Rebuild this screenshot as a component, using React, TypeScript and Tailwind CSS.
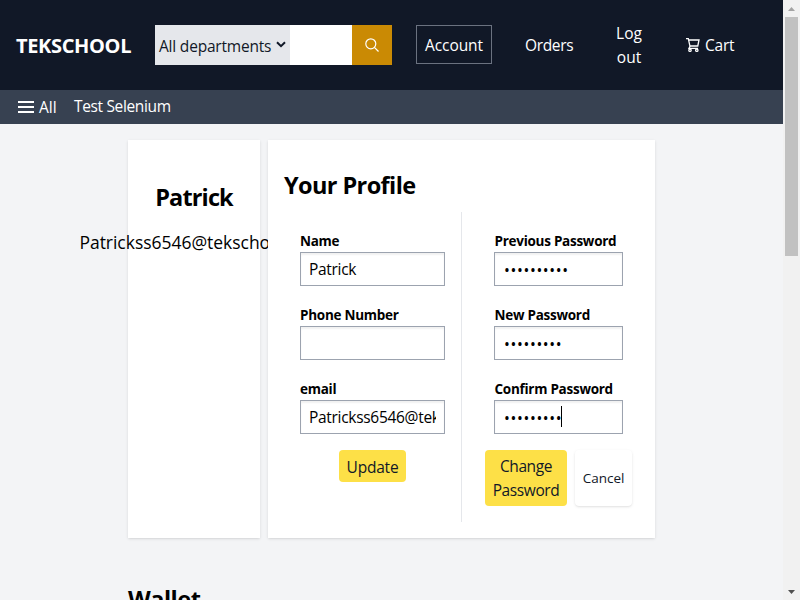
function SearchIcon() {
  return (
    <svg className="h-[14px] w-[14px]" viewBox="0 0 14 14" fill="none" stroke="currentColor" strokeWidth="1.2">
      <circle cx="5.8" cy="5.8" r="5" />
      <path d="M9.4 9.4 13.5 13.5" />
    </svg>
  );
}

function CartIcon() {
  return (
    <svg className="h-[14px] w-[14px]" viewBox="0 0 14 14" fill="none" stroke="currentColor" strokeWidth="1.3">
      <path d="M0 .7h2.3L4 8.3 3 10.4h9M2.7 2h10.3l-1.2 6H4" />
      <circle cx="4" cy="12.2" r="1.2" />
      <circle cx="10.8" cy="12.2" r="1.2" />
    </svg>
  );
}

function Header() {
  return (
    <header className="flex h-[90px] shrink-0 items-center bg-[#111827] pl-4 text-[15.5px] leading-6 text-white">
      <div className="w-[139px] pt-[2px] text-[20px] font-bold leading-7 tracking-[-0.35px]">TEKSCHOOL</div>
      <div className="flex h-10 w-[237px] text-[#111827]">
        <div className="flex w-[135px] items-center bg-[#e5e7eb] pl-1 pt-[2px]">
          <span className="w-[117px] whitespace-nowrap tracking-[-0.2px]">All departments</span>
          <svg className="-mt-[3px] h-[7px] w-[10px]" viewBox="0 0 10 7" fill="none" stroke="#111827" strokeWidth="2">
            <path d="M1 1.2 5 5.2 9 1.2" />
          </svg>
        </div>
        <div className="w-[62px] bg-white" />
        <button className="flex w-10 items-center justify-center bg-[#ca8a04] text-white">
          <SearchIcon />
        </button>
      </div>
      <nav className="flex items-center">
        <a className="-mt-px ml-6 flex h-[39px] w-[76px] items-center justify-center border border-[#6b7280] pt-px tracking-[-0.1px]">Account</a>
        <a className="ml-[33px] w-[49px] tracking-[-0.35px]">Orders</a>
        <a className="ml-[38px] w-[34px] text-center">Log out</a>
        <a className="ml-[40px] flex items-center gap-[5px] tracking-[-0.25px]">
          <CartIcon />
          Cart
        </a>
      </nav>
    </header>
  );
}

function SubNav() {
  return (
    <div className="flex h-[34px] shrink-0 items-center bg-[#374151] pl-[18px] text-[15.5px] leading-6 text-white">
      <svg className="mr-[5px] h-[12px] w-4" viewBox="0 0 16 12">
        <path d="M0 1h16M0 6h16M0 11h16" stroke="white" strokeWidth="2" />
      </svg>
      <span className="w-[35px]">All</span>
      <span className="-mt-[2px] tracking-[-0.35px]">Test Selenium</span>
    </div>
  );
}

type FieldProps = { label: string; value?: string; password?: boolean; caret?: boolean };

function Field({ label, value = "", password, caret }: FieldProps) {
  return (
    <label className="relative mb-4 flex h-[58px] flex-col">
      <span className={"h-[24px] whitespace-nowrap text-[13.5px] font-bold leading-[26px] tracking-[-0.27px] text-black " + (password ? "pl-[0.5px]" : "")}>
        {label}
      </span>
      <input
        readOnly
        type={password ? "password" : "text"}
        value={value}
        className={
          "h-[34px] w-full border border-[#9ca3af] bg-white pr-2 text-[15.5px] text-black shadow-[inset_0_2px_2px_rgba(0,0,0,0.06)] outline-none " +
          (password ? "pl-[9px] pt-[2px] tracking-[0.65px]" : "pl-2 tracking-[-0.3px]")
        }
      />
      {caret && <span className="absolute left-[67px] top-[30px] h-[21px] w-px bg-black" />}
    </label>
  );
}

function ProfileForm() {
  return (
    <section className="relative z-10 h-[398px] w-[387px] bg-white p-4 shadow-sm">
      <h2 className="pt-[13px] text-[23.5px] font-bold leading-8 tracking-[-0.6px] text-black">Your Profile</h2>
      <div className="mt-[11px] flex h-[310px]">
        <div className="w-[178px] border-r border-[#e5e7eb] px-4 pt-4">
          <Field label="Name" value="Patrick" />
          <Field label="Phone Number" />
          <Field label="email" value="Patrickss6546@tekschool.us" />
          <div className="flex justify-center">
            <button className="h-8 w-[67px] rounded bg-[#fde047] pt-[2px] text-[15.5px] leading-6 tracking-[-0.2px] text-[#111827]">Update</button>
          </div>
        </div>
        <div className="w-[177px] pt-4">
          <div className="ml-8 w-[129px]">
            <Field label="Previous Password" value="aaaaaaaaaa" password />
            <Field label="New Password" value="aaaaaaaaa" password />
            <Field label="Confirm Password" value="aaaaaaaaa" password caret />
          </div>
          <div className="ml-[23px] flex gap-2">
            <button className="h-14 w-[82px] rounded bg-[#fde047] text-[15.5px] leading-6 tracking-[-0.4px] text-[#111827]">
              Change Password
            </button>
            <button className="h-14 w-[57px] rounded bg-white text-[13.5px] text-[#111827] shadow-sm">Cancel</button>
          </div>
        </div>
      </div>
    </section>
  );
}

function Scrollbar() {
  return (
    <div className="flex w-[17px] flex-col items-center bg-[#f1f1f1]">
      <div className="flex h-[17px] items-center">
        <svg className="h-1 w-[7px]" viewBox="0 0 7 4" fill="#a3a3a3"><path d="M0 4 3.5 0 7 4z" /></svg>
      </div>
      <div className="h-[239px] w-[13px] bg-[#c1c1c1]" />
      <div className="mt-auto flex h-[17px] items-center">
        <svg className="h-1 w-[7px]" viewBox="0 0 7 4" fill="#505050"><path d="M0 0 3.5 4 7 0z" /></svg>
      </div>
    </div>
  );
}

export default function App() {
  return (
    <div className="flex h-[600px] w-[800px] overflow-hidden bg-[#f3f4f6] font-['Open_Sans',sans-serif]">
      <div className="flex w-[783px] flex-col overflow-hidden">
        <Header />
        <SubNav />
        <main className="pl-32 pt-4">
          <div className="flex gap-2">
            <aside className="flex h-[398px] w-[132px] flex-col items-center bg-white pt-[41px] text-black shadow-sm">
              <h2 className="text-[23.5px] font-bold leading-8 tracking-[-0.85px]">Patrick</h2>
              <p className="mt-[15px] whitespace-nowrap text-[17.5px] font-medium leading-7 tracking-[-0.03px]">
                Patrickss6546@tekschool.us
              </p>
            </aside>
            <ProfileForm />
          </div>
          <h2 className="mt-[45px] text-[23.5px] font-bold leading-8 tracking-[-0.5px] text-black">Wallet</h2>
        </main>
      </div>
      <Scrollbar />
    </div>
  );
}
